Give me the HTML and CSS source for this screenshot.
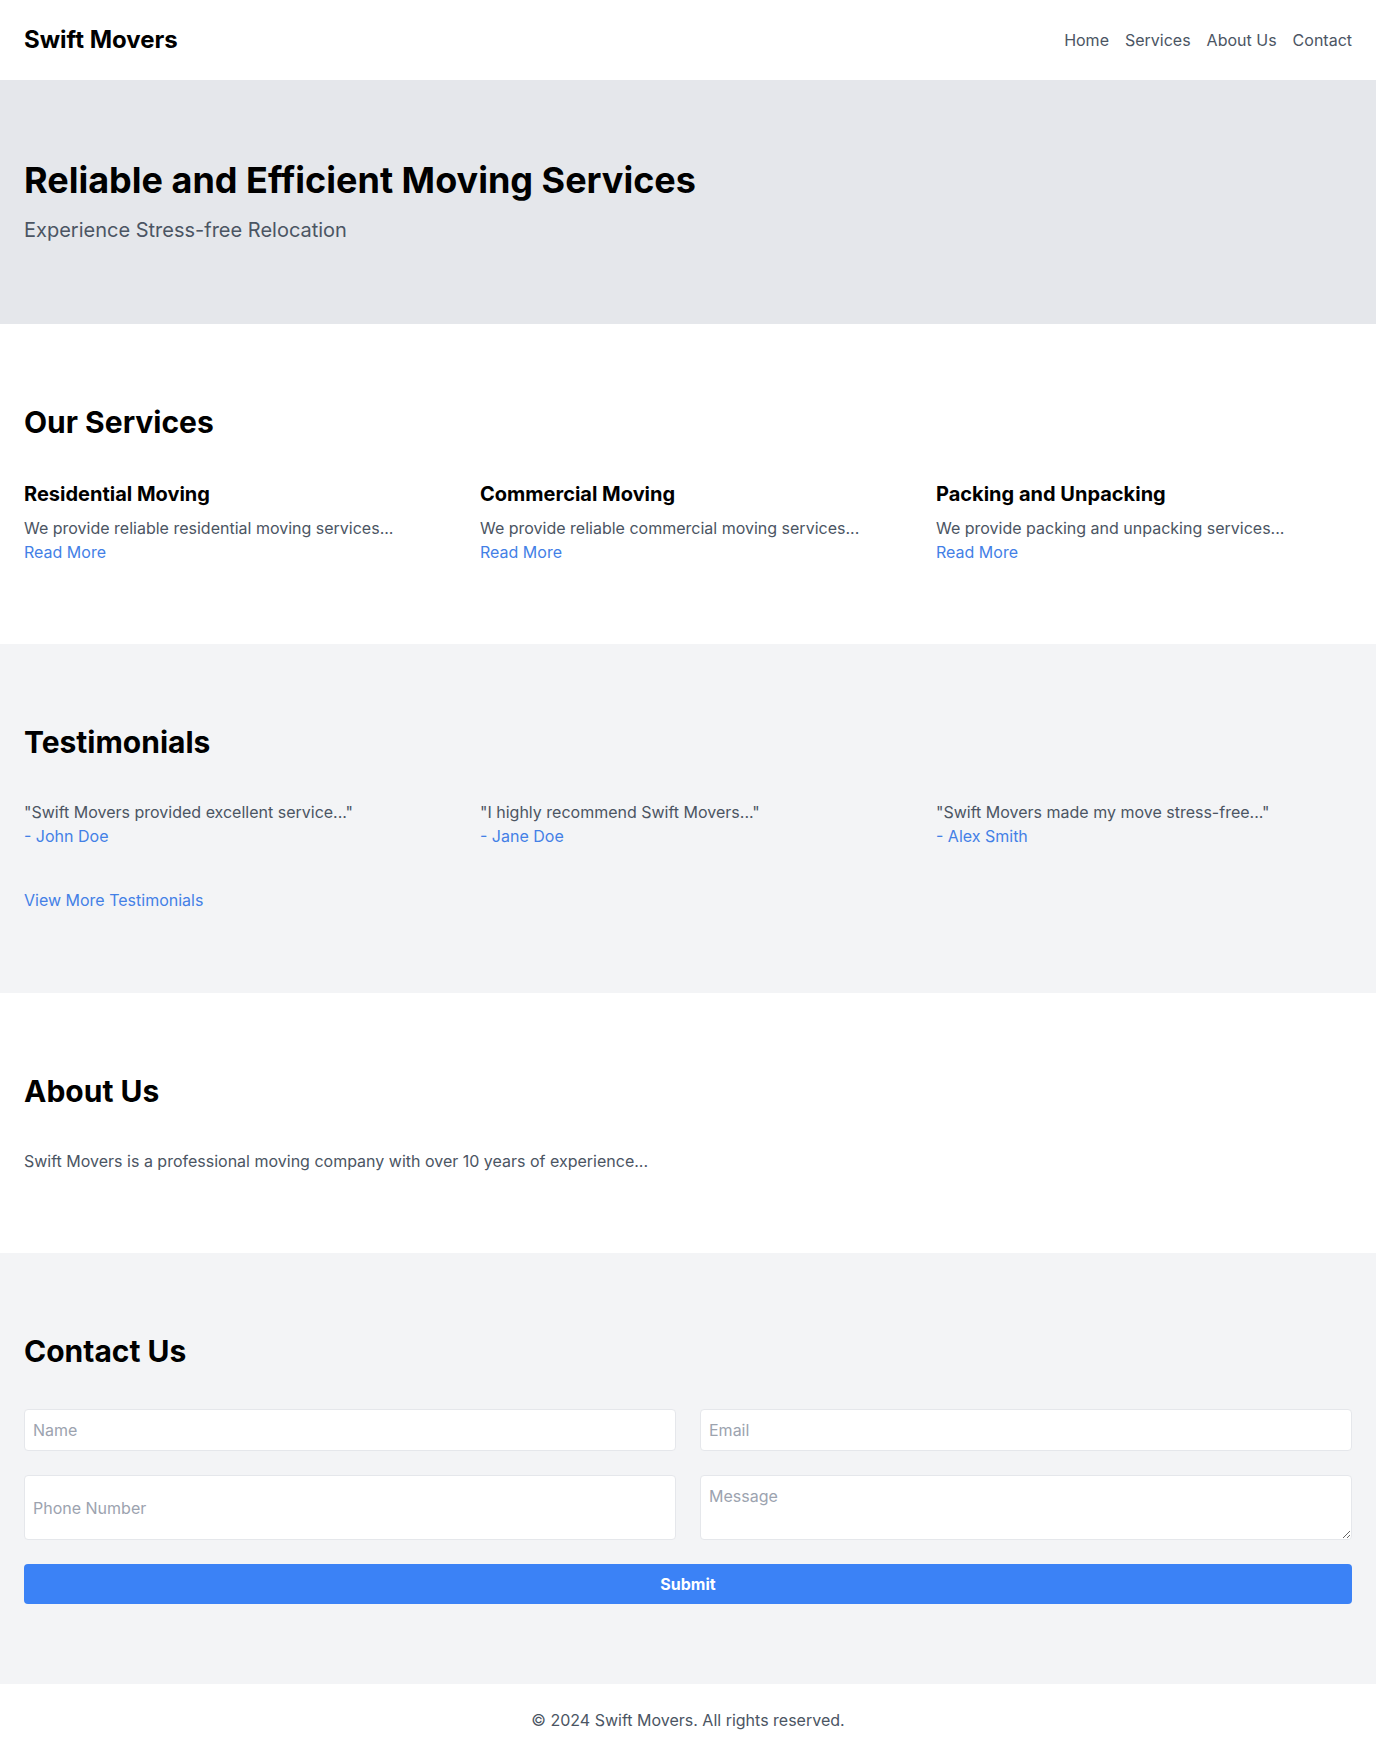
FILE: index.html
```html
<!DOCTYPE html>
<html lang="en">
<head>
<meta charset="utf-8">
<title>Swift Movers</title>
<link rel="stylesheet" href="styles.css">
</head>
<body>
<header class="site-header">
  <div class="logo">Swift Movers</div>
  <nav class="nav">
    <a href="#">Home</a>
    <a href="#">Services</a>
    <a href="#">About Us</a>
    <a href="#">Contact</a>
  </nav>
</header>

<section class="hero">
  <h1>Reliable and Efficient Moving Services</h1>
  <p>Experience Stress-free Relocation</p>
</section>

<section class="section">
  <h2>Our Services</h2>
  <div class="grid3">
    <div class="card">
      <h3>Residential Moving</h3>
      <p>We provide reliable residential moving services...</p>
      <a href="#" class="link">Read More</a>
    </div>
    <div class="card">
      <h3>Commercial Moving</h3>
      <p>We provide reliable commercial moving services...</p>
      <a href="#" class="link">Read More</a>
    </div>
    <div class="card">
      <h3>Packing and Unpacking</h3>
      <p>We provide packing and unpacking services...</p>
      <a href="#" class="link">Read More</a>
    </div>
  </div>
</section>

<section class="section alt testimonials">
  <h2>Testimonials</h2>
  <div class="grid3">
    <div class="quote">
      <p>"Swift Movers provided excellent service..."</p>
      <span class="link">- John Doe</span>
    </div>
    <div class="quote">
      <p>"I highly recommend Swift Movers..."</p>
      <span class="link">- Jane Doe</span>
    </div>
    <div class="quote">
      <p>"Swift Movers made my move stress-free..."</p>
      <span class="link">- Alex Smith</span>
    </div>
  </div>
  <a href="#" class="link more">View More Testimonials</a>
</section>

<section class="section">
  <h2>About Us</h2>
  <p class="about-text">Swift Movers is a professional moving company with over 10 years of experience...</p>
</section>

<section class="section alt">
  <h2>Contact Us</h2>
  <form class="form">
    <input type="text" placeholder="Name">
    <input type="email" placeholder="Email">
    <input type="tel" placeholder="Phone Number">
    <textarea placeholder="Message" rows="2"></textarea>
    <button type="button" class="submit">Submit</button>
  </form>
</section>

<footer class="footer">© 2024 Swift Movers. All rights reserved.</footer>
</body>
</html>
```

FILE: styles.css
```css
* { box-sizing: border-box; }
html, body { margin: 0; padding: 0; }
body {
  font-family: Inter, "Noto Sans", "Liberation Sans", sans-serif;
  font-size: 16px;
  line-height: 24px;
  color: #000;
  background: #fff;
}
a { text-decoration: none; color: inherit; }
h1, h2, h3, p { margin: 0; }

.site-header {
  display: flex;
  justify-content: space-between;
  align-items: center;
  padding: 24px;
  background: #fff;
}
.logo { font-size: 24px; line-height: 32px; font-weight: 700; }
.nav { display: flex; gap: 16px; }
.nav a { color: #4b5563; }

.hero {
  background: #e5e7eb;
  padding: 80px 24px;
}
.hero h1 { font-size: 36px; line-height: 40px; font-weight: 700; margin-bottom: 16px; }
.hero p { font-size: 20px; line-height: 28px; color: #4b5563; }

.section { padding: 80px 24px; background: #fff; }
.section.alt { background: #f3f4f6; }
.section.testimonials { padding-bottom: 81px; }
.section h2 { font-size: 30px; line-height: 36px; font-weight: 700; margin-bottom: 40px; }

.grid3 {
  display: grid;
  grid-template-columns: repeat(3, 1fr);
  gap: 40px;
}
.card h3 { font-size: 20px; line-height: 28px; font-weight: 700; margin-bottom: 8px; }
.card p, .quote p, .about-text { color: #4b5563; }
.card .link, .quote .link { display: block; }
.link { color: #4380e6; }
.more { display: block; margin-top: 40px; }

.form {
  display: grid;
  grid-template-columns: 1fr 1fr;
  gap: 24px;
}
.form input, .form textarea {
  font-family: inherit;
  font-size: 16px;
  line-height: 24px;
  padding: 8px;
  border: 1px solid #e5e7eb;
  border-radius: 4px;
  background: #fff;
  color: #111;
  width: 100%;
  margin: 0;
}
.form textarea { height: 65px; resize: vertical; display: block; }
.form ::placeholder { color: #9ca3af; opacity: 1; }
.submit {
  grid-column: 1 / -1;
  font-family: inherit;
  font-size: 16px;
  line-height: 24px;
  font-weight: 700;
  color: #fff;
  background: #3b82f6;
  border: none;
  border-radius: 4px;
  padding: 8px 16px;
  height: 40px;
}

.footer {
  padding: 24px;
  text-align: center;
  color: #4b5563;
  background: #fff;
}
```
